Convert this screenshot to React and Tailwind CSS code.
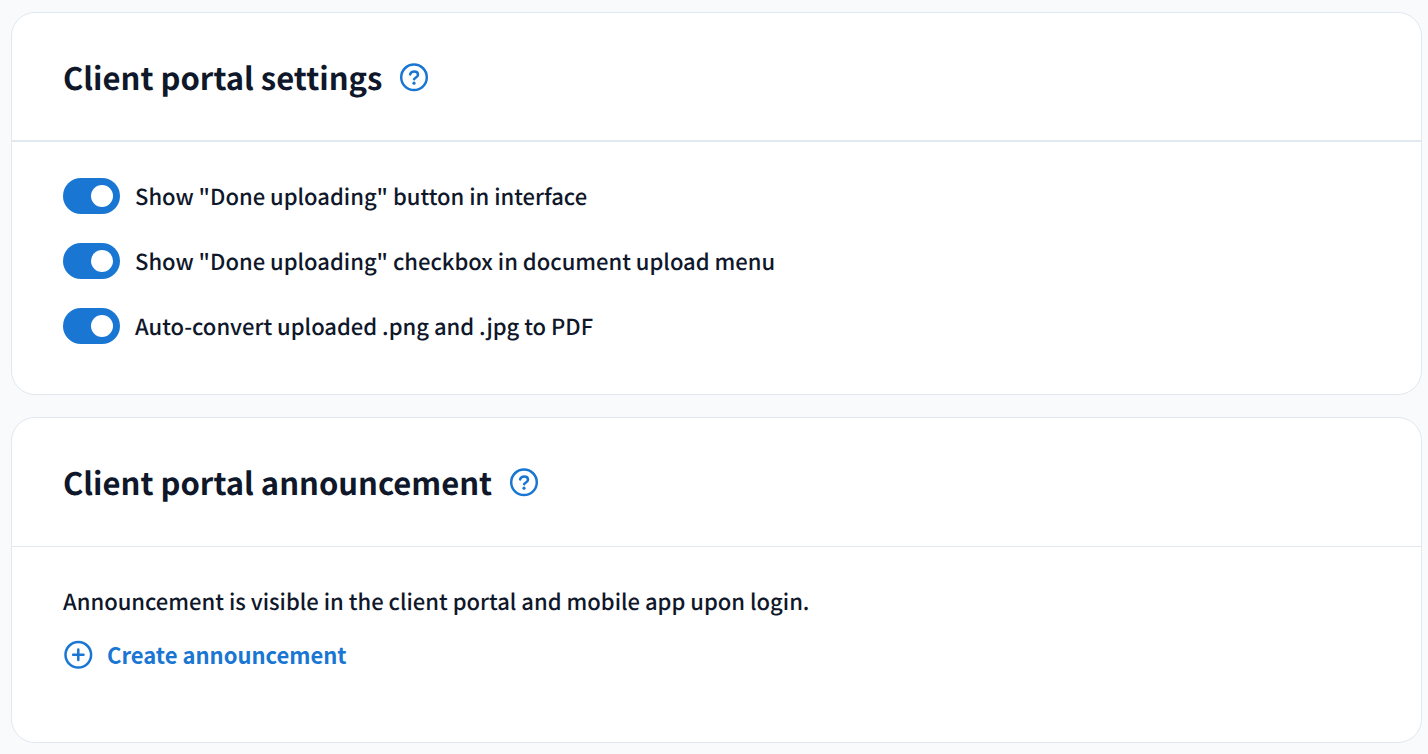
import React, { useState } from "react";

function HelpIcon() {
  return (
    <svg viewBox="0 0 30 30" className="size-[30px]" fill="none" stroke="currentColor" strokeWidth="2.5" strokeLinecap="round" strokeLinejoin="round" aria-hidden="true">
      <circle cx="15" cy="15.3" r="12.8" />
      <path d="M11.1 12.4c.6-1.8 2.1-2.8 4-2.8 2.2 0 3.9 1.3 3.9 3.2 0 2.4-3.2 2.6-3.9 4.4" />
      <circle cx="15" cy="21.2" r="1.6" fill="currentColor" stroke="none" />
    </svg>
  );
}

function PlusIcon() {
  return (
    <svg viewBox="0 0 30 30" className="size-[30px]" fill="none" stroke="currentColor" strokeWidth="2.5" strokeLinecap="round" aria-hidden="true">
      <circle cx="15.3" cy="15.8" r="12.8" />
      <path d="M15.3 10.6v10.4M10.1 15.8h10.4" />
    </svg>
  );
}

function Card({ title, divider, children }) {
  return (
    <section className="rounded-3xl border border-[#e2e8f0] bg-white">
      <header className={`flex min-h-[129px] items-center gap-[17px] px-[51px] ${divider}`}>
        <h2 className="text-[31px] leading-10 font-bold">{title}</h2>
        <button type="button" aria-label={`Help: ${title}`} className="text-[#1976d2]">
          <HelpIcon />
        </button>
      </header>
      {children}
    </section>
  );
}

function Toggle({ label }) {
  const [on, setOn] = useState(true);
  return (
    <label className="flex items-center gap-[15px]">
      <input type="checkbox" role="switch" checked={on} onChange={() => setOn(!on)} className="peer sr-only" />
      <span className="flex h-9 w-[57px] shrink-0 items-center rounded-full bg-slate-400 px-[7px] peer-checked:justify-end peer-checked:bg-[#1976d2]">
        <span className="size-[22px] rounded-full bg-white" />
      </span>
      <span>{label}</span>
    </label>
  );
}

export default function App() {
  return (
    <main className="flex min-h-screen flex-col gap-[22px] bg-[#f8fafc] pt-3 pr-1.5 pb-[11px] pl-[11px] font-['Noto_Sans_CJK_SC','Noto_Sans',sans-serif] text-[22px] leading-9 font-medium text-[#0f172a] [text-rendering:geometricPrecision]">
      <Card title="Client portal settings" divider="border-b-2 border-[#e2e8f0]">
        <div className="flex flex-col items-start gap-[29px] px-[51px] pt-9 pb-[50px]">
          <Toggle label={'Show "Done uploading" button in interface'} />
          <Toggle label={'Show "Done uploading" checkbox in document upload menu'} />
          <Toggle label="Auto-convert uploaded .png and .jpg to PDF" />
        </div>
      </Card>
      <Card title="Client portal announcement" divider="border-b border-[#e2e8f0]">
        <div className="flex flex-col items-start gap-[17px] px-[51px] pt-9 pb-[70px]">
          <p>Announcement is visible in the client portal and mobile app upon login.</p>
          <button type="button" className="flex items-center gap-3.5 font-bold text-[#1976d2]">
            <PlusIcon />
            Create announcement
          </button>
        </div>
      </Card>
    </main>
  );
}
